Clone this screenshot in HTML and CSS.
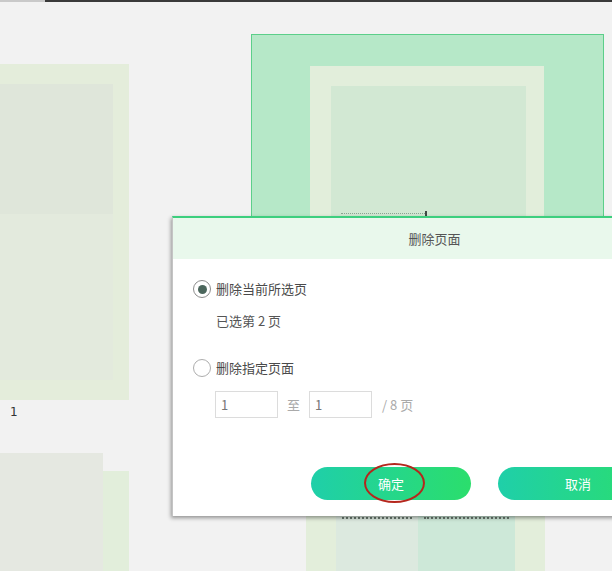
FILE: index.html
```html
<!DOCTYPE html>
<html lang="zh-CN">
<head>
<meta charset="utf-8">
<title>删除页面</title>
<link rel="stylesheet" href="styles.css">
</head>
<body>
<div class="viewer">
  <div class="topbar"><span class="tb-left"></span><span class="tb-right"></span></div>
  <div class="grid">
    <div class="cell cell-a1">
      <div class="thumb thumb-a1">
        <div class="a1-top"></div>
        <div class="a1-bottom"></div>
      </div>
      <div class="page-no">1</div>
    </div>
    <div class="cell cell-b1">
      <div class="selection">
        <div class="thumb thumb-b1">
          <div class="b1-inner"><div class="b1-txt"><span class="tick"></span></div></div>
        </div>
      </div>
    </div>
    <div class="cell cell-a2">
      <div class="thumb thumb-a2"><div class="a2-overlay"></div></div>
    </div>
    <div class="cell cell-b2">
      <div class="thumb thumb-b2">
        <div class="strip s1"></div>
        <div class="strip s2"><div class="txt"></div></div>
        <div class="strip s3"><div class="txt"></div></div>
        <div class="strip s4"></div>
      </div>
    </div>
  </div>

  <div class="dialog">
    <div class="dlg-head">删除页面</div>
    <div class="dlg-body">
      <div class="opt">
        <span class="radio checked"><span class="dot"></span></span>
        <span class="opt-label">删除当前所选页</span>
      </div>
      <div class="sub">已选第 2 页</div>
      <div class="opt opt2">
        <span class="radio"></span>
        <span class="opt-label">删除指定页面</span>
      </div>
      <div class="range">
        <div class="field">1</div>
        <span class="to">至</span>
        <div class="field">1</div>
        <span class="total">/ 8 页</span>
      </div>
      <div class="actions">
        <button class="btn">确定</button>
        <button class="btn">取消</button>
      </div>
    </div>
    <div class="mark"></div>
  </div>
</div>
</body>
</html>
```

FILE: styles.css
```css
* { box-sizing: border-box; }
html, body { margin: 0; padding: 0; }
body {
  background: #f2f2f2;
  font-family: "Noto Sans CJK SC", "Noto Sans", sans-serif;
}
.viewer {
  position: relative;
  width: 612px;
  height: 571px;
  overflow: hidden;
  background: #f2f2f2;
}
.topbar { display: flex; height: 2px; }
.tb-left { width: 45px; background: #c9c9c9; }
.tb-right { flex: 1; background: #3a3a3a; }

.grid {
  display: grid;
  grid-template-columns: 234px 353px;
  column-gap: 122px;
  row-gap: 15px;
  margin-left: -105px;
  padding-top: 32px;
  align-items: start;
}
.thumb { width: 234px; }

.cell-a1 { margin-top: 30px; }
.thumb-a1 {
  height: 336px;
  background: #e4eddb;
  padding: 20px 16px 0 0;
  display: flex;
  flex-direction: column;
}
.a1-top { height: 130px; background: #dfe6da; }
.a1-bottom { height: 166px; background: #e3eadd; }
.page-no {
  margin: 5px 0 0 115px;
  height: 14px;
  line-height: 14px;
  font-family: "DejaVu Sans", sans-serif;
  font-size: 12px;
  color: #333;
}

.selection {
  height: 404px;
  background: #b6e8c8;
  border: 1px solid #5ccf8a;
  padding: 31px 0 0 58px;
}
.thumb-b1 {
  height: 360px;
  background: #e2eedb;
  padding: 20px 18px 0 21px;
}
.b1-inner { height: 300px; background: #d2e8d3; padding: 127px 0 0 10px; }
.b1-txt {
  width: 86px;
  height: 4px;
  border-top: 1px dotted #8aa392;
  display: flex;
  justify-content: flex-end;
}
.tick { width: 2px; height: 5px; margin-top: -3px; background: #3f4a44; }

.cell-a2 { margin-top: 18px; }
.thumb-a2 { height: 200px; background: #e2eedb; display: flow-root; }
.a2-overlay {
  width: 208px;
  height: 220px;
  margin-top: -18px;
  background: #e5e8e1;
}

.cell-b2 { margin: 10px 0 0 55px; }
.thumb-b2 { width: 239px; height: 200px; display: flex; }
.strip { height: 100%; padding-top: 54px; }
.s1 { width: 30px; background: #e3eedb; }
.s2 { width: 82px; background: #dce9df; }
.s3 { width: 97px; background: #cde8d8; }
.s4 { width: 30px; background: #e3eedb; }
.txt { height: 3px; margin: 0 6px; border-top: 2px dotted #6a7a70; }

.dialog {
  position: absolute;
  left: 172px;
  top: 216px;
  width: 524px;
  height: 300px;
  background: #fff;
  border-top: 2px solid #3dcf7e;
  border-left: 1px solid #c4c4c4;
  box-shadow: -1px 2px 4px rgba(0, 0, 0, 0.4);
}
.dlg-head {
  height: 41px;
  background: #e9f8ec;
  display: flex;
  align-items: center;
  justify-content: center;
  font-size: 13px;
  color: #555;
}
.dlg-body { padding: 21px 0 0 20px; }
.opt {
  display: flex;
  align-items: center;
  gap: 5px;
  height: 18px;
}
.opt2 { margin-top: 29px; }
.radio {
  width: 18px;
  height: 18px;
  border-radius: 50%;
  border: 1px solid #adadad;
  display: flex;
  align-items: center;
  justify-content: center;
}
.radio.checked { border: 1.5px solid #8c8c8c; }
.dot { width: 9px; height: 9px; border-radius: 50%; background: #4b665c; }
.opt-label { font-size: 13px; color: #4a4a4a; line-height: 18px; }
.sub {
  margin: 14px 0 0 23px;
  height: 18px;
  line-height: 18px;
  font-size: 13px;
  color: #555;
}
.range {
  display: flex;
  align-items: center;
  margin: 14px 0 0 22px;
  height: 27px;
}
.field {
  width: 63px;
  height: 27px;
  border: 1px solid #dcdcdc;
  padding-left: 5px;
  line-height: 25px;
  font-size: 13px;
  color: #777;
}
.to { width: 31px; text-align: center; font-size: 13px; color: #aaa; }
.total { margin-left: 10px; font-size: 13px; color: #aaa; }
.actions {
  display: flex;
  gap: 27px;
  margin: 49px 0 0 118px;
}
.btn {
  width: 160px;
  height: 33px;
  border: 0;
  border-radius: 17px;
  background: linear-gradient(90deg, #1fcfa9, #2bde6c);
  color: #fff;
  font-family: "Noto Sans CJK SC", "Noto Sans", sans-serif;
  font-size: 13px;
  padding: 0;
}
.mark {
  position: absolute;
  left: 191px;
  top: 245px;
  width: 61px;
  height: 40px;
  border: 2.5px solid #b5271d;
  border-radius: 50%;
}
```
